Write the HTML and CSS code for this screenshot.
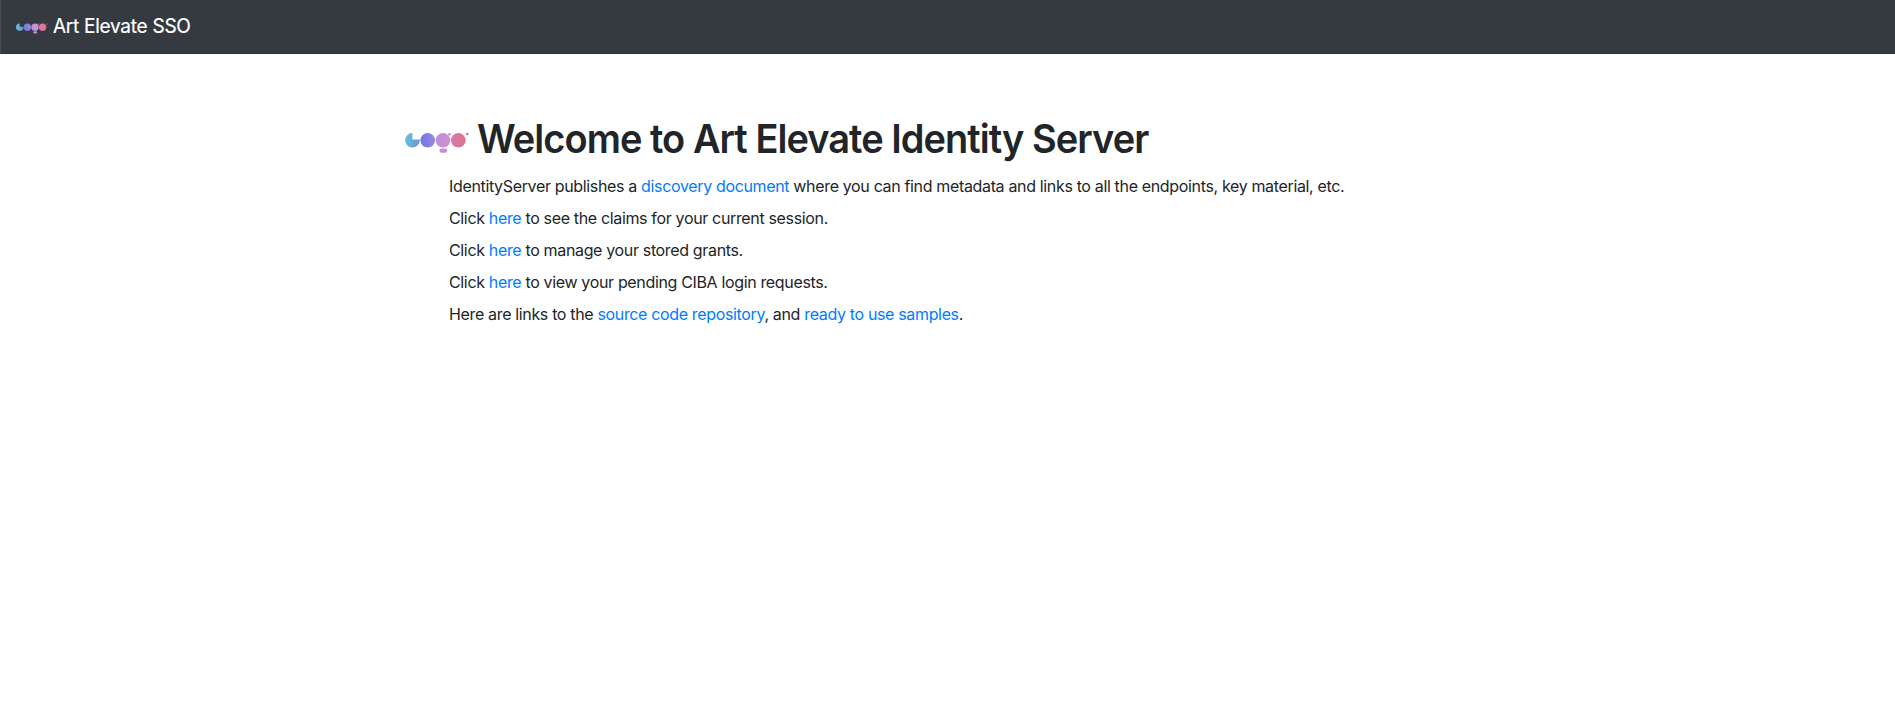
FILE: index.html
```html
<!DOCTYPE html>
<html lang="en">
<head>
<meta charset="utf-8">
<title>Art Elevate SSO</title>
<link rel="stylesheet" href="styles.css">
</head>
<body>
<svg class="defs" width="0" height="0" aria-hidden="true">
  <defs>
    <linearGradient id="g1"><stop offset="0" stop-color="#62c2d9"/><stop offset="1" stop-color="#6c93dc"/></linearGradient>
    <linearGradient id="g2"><stop offset="0" stop-color="#7078e6"/><stop offset="1" stop-color="#9a86e2"/></linearGradient>
    <linearGradient id="g3"><stop offset="0" stop-color="#bb8fe0"/><stop offset="1" stop-color="#d490cc"/></linearGradient>
    <linearGradient id="g4"><stop offset="0" stop-color="#cf7db0"/><stop offset="1" stop-color="#e7708d"/></linearGradient>
    <symbol id="logo" viewBox="0 0 64 22">
      <path fill="url(#g1)" d="M7.4 1A7.3 7.3 0 1 0 14.7 7.6H7.4Z"/>
      <circle fill="url(#g2)" cx="22.7" cy="8.3" r="7.3"/>
      <circle fill="url(#g3)" cx="38" cy="8.3" r="7.3"/>
      <circle fill="#d490cc" cx="44.5" cy="2.3" r="1.4"/>
      <rect fill="url(#g3)" x="34.5" y="16.6" width="7.8" height="4.2" rx="2"/>
      <circle fill="url(#g4)" cx="53.3" cy="8.3" r="7.3"/>
      <circle fill="#e7607d" cx="62.2" cy="2" r="1.2"/>
    </symbol>
  </defs>
</svg>
<nav class="navbar">
  <a class="brand"><svg class="brand-logo"><use href="#logo"/></svg><span class="brand-text">Art Elevate SSO</span></a>
</nav>
<main class="container">
  <h1 class="title"><svg class="title-logo"><use href="#logo"/></svg><span class="title-text">Welcome to Art Elevate Identity Server</span></h1>
  <div class="rows">
    <p class="row">IdentityServer publishes a <a>discovery document</a> where you can find metadata and links to all the endpoints, key material, etc.</p>
    <p class="row">Click <a>here</a> to see the claims for your current session.</p>
    <p class="row">Click <a>here</a> to manage your stored grants.</p>
    <p class="row">Click <a>here</a> to view your pending CIBA login requests.</p>
    <p class="row">Here are links to the <a>source code repository</a>, and <a>ready to use samples</a>.</p>
  </div>
</main>
</body>
</html>
```
FILE: styles.css
```css
* { box-sizing: border-box; }
body {
  margin: 0;
  background: #fff;
  color: #212529;
  font: 400 16px/24px Inter, "Liberation Sans", sans-serif;
}
.defs { display: block; }
.navbar {
  height: 54px;
  padding: 11px 15px;
  background: #343a40;
  border-left: 1px solid #484e54;
  border-bottom: 1px solid #2b3036;
}
.brand {
  display: flex;
  align-items: center;
  gap: 5px;
  color: #fff;
  font-size: 20px;
  line-height: 30px;
  letter-spacing: -0.3px;
}
.brand-logo { width: 32px; height: 11px; margin-top: 4px; }
.brand-text { transform: scaleX(0.953); transform-origin: left; -webkit-text-stroke: 0.2px; }
.container { padding: 61px 0 0 405px; }
.title {
  display: flex;
  align-items: center;
  gap: 8px;
  margin: 0 0 8px;
  font-size: 40px;
  line-height: 48px;
  font-weight: 600;
  letter-spacing: -1px;
  white-space: nowrap;
}
.title-logo { width: 64px; height: 22px; margin-top: 8px; }
.title-text { transform: scaleX(0.949); transform-origin: left; }
.rows { padding: 3px 0 0 44px; }
.row { margin: 0 0 8px; letter-spacing: -0.345px; white-space: nowrap; }
.row a { color: #007bff; }
```
